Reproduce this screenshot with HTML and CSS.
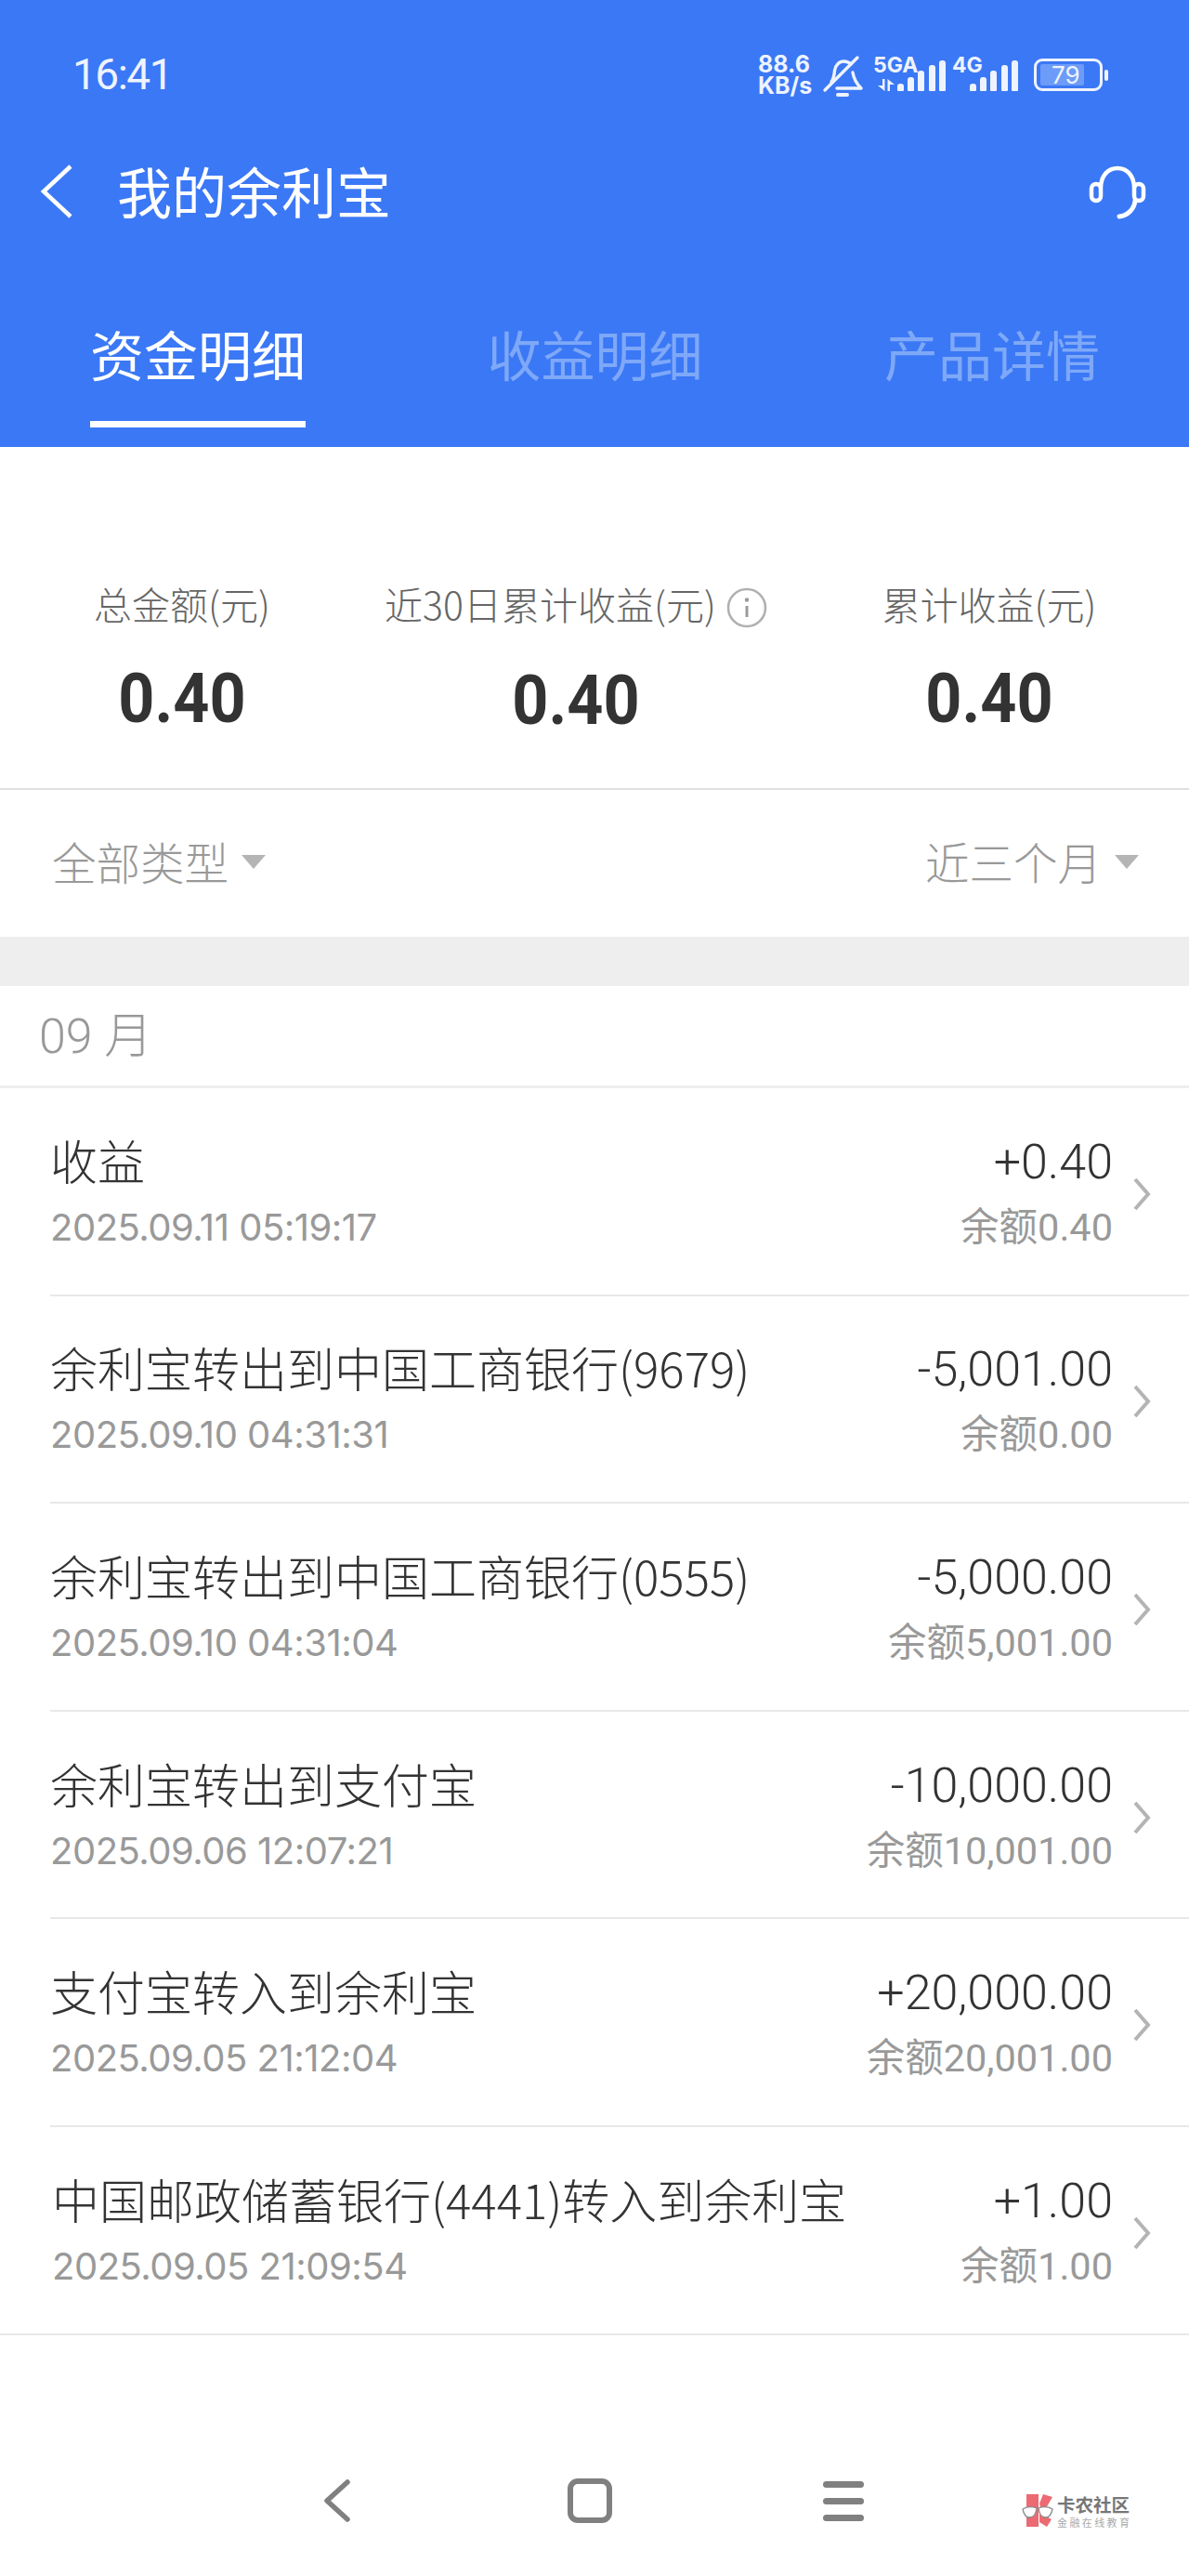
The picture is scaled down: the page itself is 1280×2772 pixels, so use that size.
FILE: index.html

```html
<!DOCTYPE html>
<html lang="zh-CN">
<head>
  <meta charset="UTF-8">
  <meta name="viewport" content="width=device-width, initial-scale=1.0">
  <title>我的余利宝</title>
  <link rel="stylesheet" href="styles.css">
</head>
<body>
  <header class="top">
    <div class="status">
      <span class="clock">16:41</span>
      <div class="status-icons">
        <span class="speed">88.6<br>KB/s</span>
        <svg class="bell" width="44" height="46" viewBox="0 0 44 46" fill="none" stroke="#eef3fe" stroke-width="3.4" stroke-linecap="round" stroke-linejoin="round">
          <path d="M10 30c3-4 3-8 3.500-12 .8-6 5-10 10-10 3 0 5.500 1 7.500 3"/>
          <path d="M33 20c1 6 3 11 9 17H16"/>
          <path d="M3 39L38 4"/>
          <path d="M17 44h10" stroke-width="4"/>
        </svg>
        <div class="net">
          <span class="net-name">5GA</span>
          <svg class="arrows" width="18" height="13" viewBox="0 0 18 13" fill="#eef3fe"><path d="M5 0h2.500v13L0 7h5zM10.500 0L18 6h-5v7h-2.500z"/></svg>
          <div class="bars">
            <i class="b1"></i><i class="b2"></i><i class="b3"></i><i class="b4"></i><i class="b5"></i>
          </div>
        </div>
        <div class="net net-4g">
          <span class="net-name">4G</span>
          <div class="bars">
            <i class="b1"></i><i class="b2"></i><i class="b3"></i><i class="b4"></i><i class="b5"></i>
          </div>
        </div>
        <div class="battery">
          <div class="battery-body">
            <div class="battery-fill"></div>
            <span class="battery-num">79</span>
          </div>
          <div class="battery-tip"></div>
        </div>
      </div>
    </div>

    <div class="nav">
      <svg class="nav-back" width="36" height="58" viewBox="0 0 36 58" fill="none" stroke="#fff" stroke-width="4.500"><path d="M34 2L5 29l29 27"/></svg>
      <h1>我的余利宝</h1>
      <svg class="nav-help" width="62" height="62" viewBox="0 0 62 62" fill="none" stroke="#fff" stroke-width="4.500" stroke-linecap="round">
        <path d="M13 24C13 11 21 3 31 3s18 8 18 21"/>
        <rect x="3" y="20" width="10" height="18" rx="5"/>
        <rect x="49" y="20" width="10" height="18" rx="5"/>
        <path d="M50 38c-1 9-8 16-17 17" stroke-width="5"/>
      </svg>
    </div>

    <div class="tabs">
      <div class="tab active">资金明细</div>
      <div class="tab">收益明细</div>
      <div class="tab">产品详情</div>
    </div>
  </header>

  <section class="summary">
    <div class="stat stat-a">
      <div class="stat-label">总金额(元)</div>
      <div class="stat-value">0.40</div>
    </div>
    <div class="stat stat-b">
      <div class="stat-label">近30日累计收益(元)
        <svg class="info" width="44" height="44" viewBox="0 0 44 44" fill="none"><circle cx="22" cy="22" r="20" stroke="#b0b0b0" stroke-width="2.600"/><circle cx="22" cy="13.500" r="2.200" fill="#9a9a9a"/><path d="M22 20v12" stroke="#9a9a9a" stroke-width="3"/></svg>
      </div>
      <div class="stat-value">0.40</div>
    </div>
    <div class="stat stat-c">
      <div class="stat-label">累计收益(元)</div>
      <div class="stat-value">0.40</div>
    </div>
  </section>

  <section class="filters">
    <div class="filter">全部类型<span class="caret"></span></div>
    <div class="filter">近三个月<span class="caret"></span></div>
  </section>

  <div class="gap"></div>

  <div class="month">09 月</div>

  <ul class="list">
    <li class="row">
      <div class="row-main"><div class="row-title">收益</div><div class="row-time">2025.09.11 05:19:17</div></div>
      <div class="row-money"><div class="row-amount">+0.40</div><div class="row-balance">余额0.40</div></div>
      <svg class="chev" width="20" height="36" viewBox="0 0 20 36" fill="none" stroke="#b4b4b4" stroke-width="4"><path d="M3 2l14 16L3 34"/></svg>
    </li>
    <li class="row">
      <div class="row-main"><div class="row-title">余利宝转出到中国工商银行(9679)</div><div class="row-time">2025.09.10 04:31:31</div></div>
      <div class="row-money"><div class="row-amount">-5,001.00</div><div class="row-balance">余额0.00</div></div>
      <svg class="chev" width="20" height="36" viewBox="0 0 20 36" fill="none" stroke="#b4b4b4" stroke-width="4"><path d="M3 2l14 16L3 34"/></svg>
    </li>
    <li class="row">
      <div class="row-main"><div class="row-title">余利宝转出到中国工商银行(0555)</div><div class="row-time">2025.09.10 04:31:04</div></div>
      <div class="row-money"><div class="row-amount">-5,000.00</div><div class="row-balance">余额5,001.00</div></div>
      <svg class="chev" width="20" height="36" viewBox="0 0 20 36" fill="none" stroke="#b4b4b4" stroke-width="4"><path d="M3 2l14 16L3 34"/></svg>
    </li>
    <li class="row">
      <div class="row-main"><div class="row-title">余利宝转出到支付宝</div><div class="row-time">2025.09.06 12:07:21</div></div>
      <div class="row-money"><div class="row-amount">-10,000.00</div><div class="row-balance">余额10,001.00</div></div>
      <svg class="chev" width="20" height="36" viewBox="0 0 20 36" fill="none" stroke="#b4b4b4" stroke-width="4"><path d="M3 2l14 16L3 34"/></svg>
    </li>
    <li class="row">
      <div class="row-main"><div class="row-title">支付宝转入到余利宝</div><div class="row-time">2025.09.05 21:12:04</div></div>
      <div class="row-money"><div class="row-amount">+20,000.00</div><div class="row-balance">余额20,001.00</div></div>
      <svg class="chev" width="20" height="36" viewBox="0 0 20 36" fill="none" stroke="#b4b4b4" stroke-width="4"><path d="M3 2l14 16L3 34"/></svg>
    </li>
    <li class="row row-last">
      <div class="row-main"><div class="row-title">中国邮政储蓄银行(4441)转入到余利宝</div><div class="row-time">2025.09.05 21:09:54</div></div>
      <div class="row-money"><div class="row-amount">+1.00</div><div class="row-balance">余额1.00</div></div>
      <svg class="chev" width="20" height="36" viewBox="0 0 20 36" fill="none" stroke="#b4b4b4" stroke-width="4"><path d="M3 2l14 16L3 34"/></svg>
    </li>
  </ul>

  <footer class="sysbar">
    <svg class="sys-back" width="34" height="50" viewBox="0 0 34 50" fill="none" stroke="#808080" stroke-width="5.500" stroke-linecap="round" stroke-linejoin="round"><path d="M29 5L7 25l22 20"/></svg>
    <div class="sys-home"></div>
    <div class="sys-menu"><i></i><i></i><i></i></div>
    <div class="logo">
      <svg width="34" height="36" viewBox="0 0 34 36">
        <path d="M5 0h13v35H5zM19 10L23 0l10 3-11 19zM19 20l13 7-5 8-8-5z" fill="#ec6a72"/>
        <path d="M1 16c5-3 10-3 15-1-1 7-3 10-8 10-4 0-6-4-7-9zM18 15c5-2 10-2 15 1-1 5-3 9-7 9-5 0-7-3-8-10z" fill="#fff" stroke="#8a8a8a" stroke-width="1.300"/>
      </svg>
      <div class="logo-text">
        <div class="logo-name">卡农社区</div>
        <div class="logo-sub">金融在线教育</div>
      </div>
    </div>
  </footer>
</body>
</html>
```

FILE: styles.css

```css
* {
  box-sizing: border-box;
}
html, body {
  margin: 0;
  padding: 0;
}
body {
  width: 1280px;
  height: 2772px;
  background-color: #fff;
  font-family: "Noto Sans CJK SC", "Noto Sans", sans-serif;
  overflow: hidden;
}

/* blue header */
.top {
  height: 481px;
  background-color: #3b78f5;
  color: #fff;
}
.status {
  height: 122px;
  padding: 56px 0 0 78px;
  display: flex;
  justify-content: space-between;
}
.clock {
  font-family: Roboto, sans-serif;
  font-size: 46px;
  line-height: 48px;
  letter-spacing: -1.5px;
  color: #eef3fe;
}
.status-icons {
  display: flex;
  align-items: flex-start;
  height: 50px;
  padding-right: 87px;
}
.speed {
  font-family: Inter, sans-serif;
  font-weight: 700;
  font-size: 25px;
  line-height: 23px;
  width: 57px;
  margin-top: 2px;
  white-space: nowrap;
  color: #eef3fe;
}
.bell {
  margin: 2px 0 0 12px;
}
.net {
  position: relative;
  width: 78px;
  height: 42px;
  margin-left: 11px;
}
.net-4g {
  width: 71px;
  margin-left: 7px;
}
.net-name {
  position: absolute;
  left: 0;
  top: 2px;
  font-family: Inter, sans-serif;
  font-weight: 700;
  font-size: 23px;
  line-height: 24px;
  color: #eef3fe;
}
.arrows {
  position: absolute;
  left: 5px;
  bottom: 0;
}
.bars {
  position: absolute;
  right: 0;
  bottom: 0;
  display: flex;
  align-items: flex-end;
  gap: 4.3px;
}
.bars i {
  display: block;
  width: 7px;
  background-color: #eef3fe;
  border-radius: 3px 3px 1px 1px;
}
.b1 { height: 8px; }
.b2 { height: 15px; }
.b3 { height: 22px; }
.b4 { height: 28px; }
.b5 { height: 33px; }
.battery {
  display: flex;
  align-items: center;
  margin: 7px 0 0 17px;
}
.battery-body {
  position: relative;
  width: 74px;
  height: 35px;
  border: 3px solid #eef3fe;
  border-radius: 9px;
  padding: 3px 4px;
}
.battery-fill {
  width: 47px;
  height: 100%;
  background-color: #6c9bf8;
  border-radius: 2px;
}
.battery-num {
  position: absolute;
  left: 16px;
  top: 2px;
  font-family: Inter, sans-serif;
  font-size: 26px;
  line-height: 26px;
  color: #eef3fe;
}
.battery-tip {
  width: 4px;
  height: 12px;
  margin-left: 2px;
  background-color: #eef3fe;
  border-radius: 2px;
}

.nav {
  display: flex;
  align-items: center;
  height: 62px;
  padding: 0 46px 0 42px;
  margin-top: 53px;
}
.nav h1 {
  flex: 1;
  margin: 0 0 0 48px;
  padding-bottom: 3px;
  font-weight: 400;
  font-size: 59px;
  line-height: 59px;
}
.nav-help {
  margin-top: 6px;
}
.tabs {
  display: flex;
  justify-content: space-between;
  padding: 0 96px 0 97px;
  margin-top: 100px;
}
.tab {
  width: 232px;
  height: 123px;
  text-align: center;
  font-size: 58px;
  line-height: 80px;
  padding-top: 3px;
  color: #7ea8f8;
}
.tab.active {
  color: #fff;
  border-bottom: 7px solid #fff;
}

/* totals */
.summary {
  position: relative;
  height: 369px;
  border-bottom: 2px solid #e0e0e0;
}
.stat {
  position: absolute;
  top: 143px;
  text-align: center;
  white-space: nowrap;
}
.stat-a { left: 96px; width: 200px; }
.stat-b { left: 400px; width: 440px; }
.stat-c { left: 940px; width: 250px; }
.stat-label {
  font-size: 41px;
  font-weight: 300;
  line-height: 50px;
  color: #666;
}
.info {
  vertical-align: -9px;
  margin-left: 2px;
}
.stat-value {
  font-family: Roboto, sans-serif;
  font-weight: 700;
  font-size: 75px;
  line-height: 84px;
  margin-top: 35px;
  color: #333;
  transform: scaleX(0.91);
}

.filters {
  display: flex;
  justify-content: space-between;
  height: 158px;
  padding: 0 54px 6px 56px;
}
.filter {
  display: flex;
  align-items: center;
  font-size: 47.5px;
  font-weight: 300;
  color: #999;
}
.caret {
  width: 0;
  height: 0;
  margin-left: 14px;
  margin-top: 2px;
  border-left: 13px solid transparent;
  border-right: 13px solid transparent;
  border-top: 15px solid #b5b5b5;
}
.gap {
  height: 53px;
  background-color: #eee;
}
.month {
  height: 110px;
  padding: 0 0 0 42px;
  font-family: Roboto, "Noto Sans CJK SC", sans-serif;
  font-weight: 300;
  font-size: 52px;
  line-height: 109px;
  color: #999;
  border-bottom: 3px solid #eee;
}

/* transactions */
.list {
  list-style: none;
  margin: 0;
  padding: 0;
}
.row {
  display: flex;
  align-items: center;
  height: 223.6px;
  margin-left: 54px;
  padding: 0 41px 0 0;
  border-bottom: 2px solid #e8e8e8;
}
.row-last {
  margin-left: 0;
  padding-left: 56px;
}
.row-main {
  flex: 1;
}
.row-title {
  font-size: 51px;
  font-weight: 300;
  line-height: 60px;
  color: #333;
  white-space: nowrap;
}
.row-time {
  font-family: Inter, sans-serif;
  font-size: 40px;
  font-weight: 400;
  letter-spacing: -0.5px;
  line-height: 50px;
  margin-top: 18px;
  color: #999;
}
.row-money {
  text-align: right;
  white-space: nowrap;
}
.row-amount {
  font-family: Roboto, sans-serif;
  font-weight: 300;
  font-size: 52px;
  line-height: 66px;
  color: #333;
}
.row-balance {
  font-family: Roboto, "Noto Sans CJK SC", sans-serif;
  font-size: 41.5px;
  line-height: 50px;
  margin-top: 12px;
  color: #999;
}
.chev {
  margin: 6px 0 0 21px;
}

/* android nav bar */
.sysbar {
  position: absolute;
  left: 0;
  top: 2650px;
  width: 1280px;
  height: 90px;
}
.sys-back {
  position: absolute;
  left: 345px;
  top: 16px;
}
.sys-home {
  position: absolute;
  left: 611px;
  top: 17px;
  width: 48px;
  height: 48px;
  border: 6px solid #808080;
  border-radius: 11px;
}
.sys-menu {
  position: absolute;
  left: 886px;
  top: 20px;
  width: 44px;
  display: flex;
  flex-direction: column;
  gap: 11px;
}
.sys-menu i {
  display: block;
  height: 7px;
  background-color: #808080;
  border-radius: 4px;
}
.logo {
  position: absolute;
  left: 1100px;
  top: 34px;
  display: flex;
  gap: 4px;
}
.logo-name {
  font-size: 19.5px;
  line-height: 22px;
  font-weight: 700;
  color: #777;
  white-space: nowrap;
}
.logo-sub {
  font-size: 11px;
  line-height: 16px;
  letter-spacing: 2.4px;
  color: #aaa;
  white-space: nowrap;
}
```
